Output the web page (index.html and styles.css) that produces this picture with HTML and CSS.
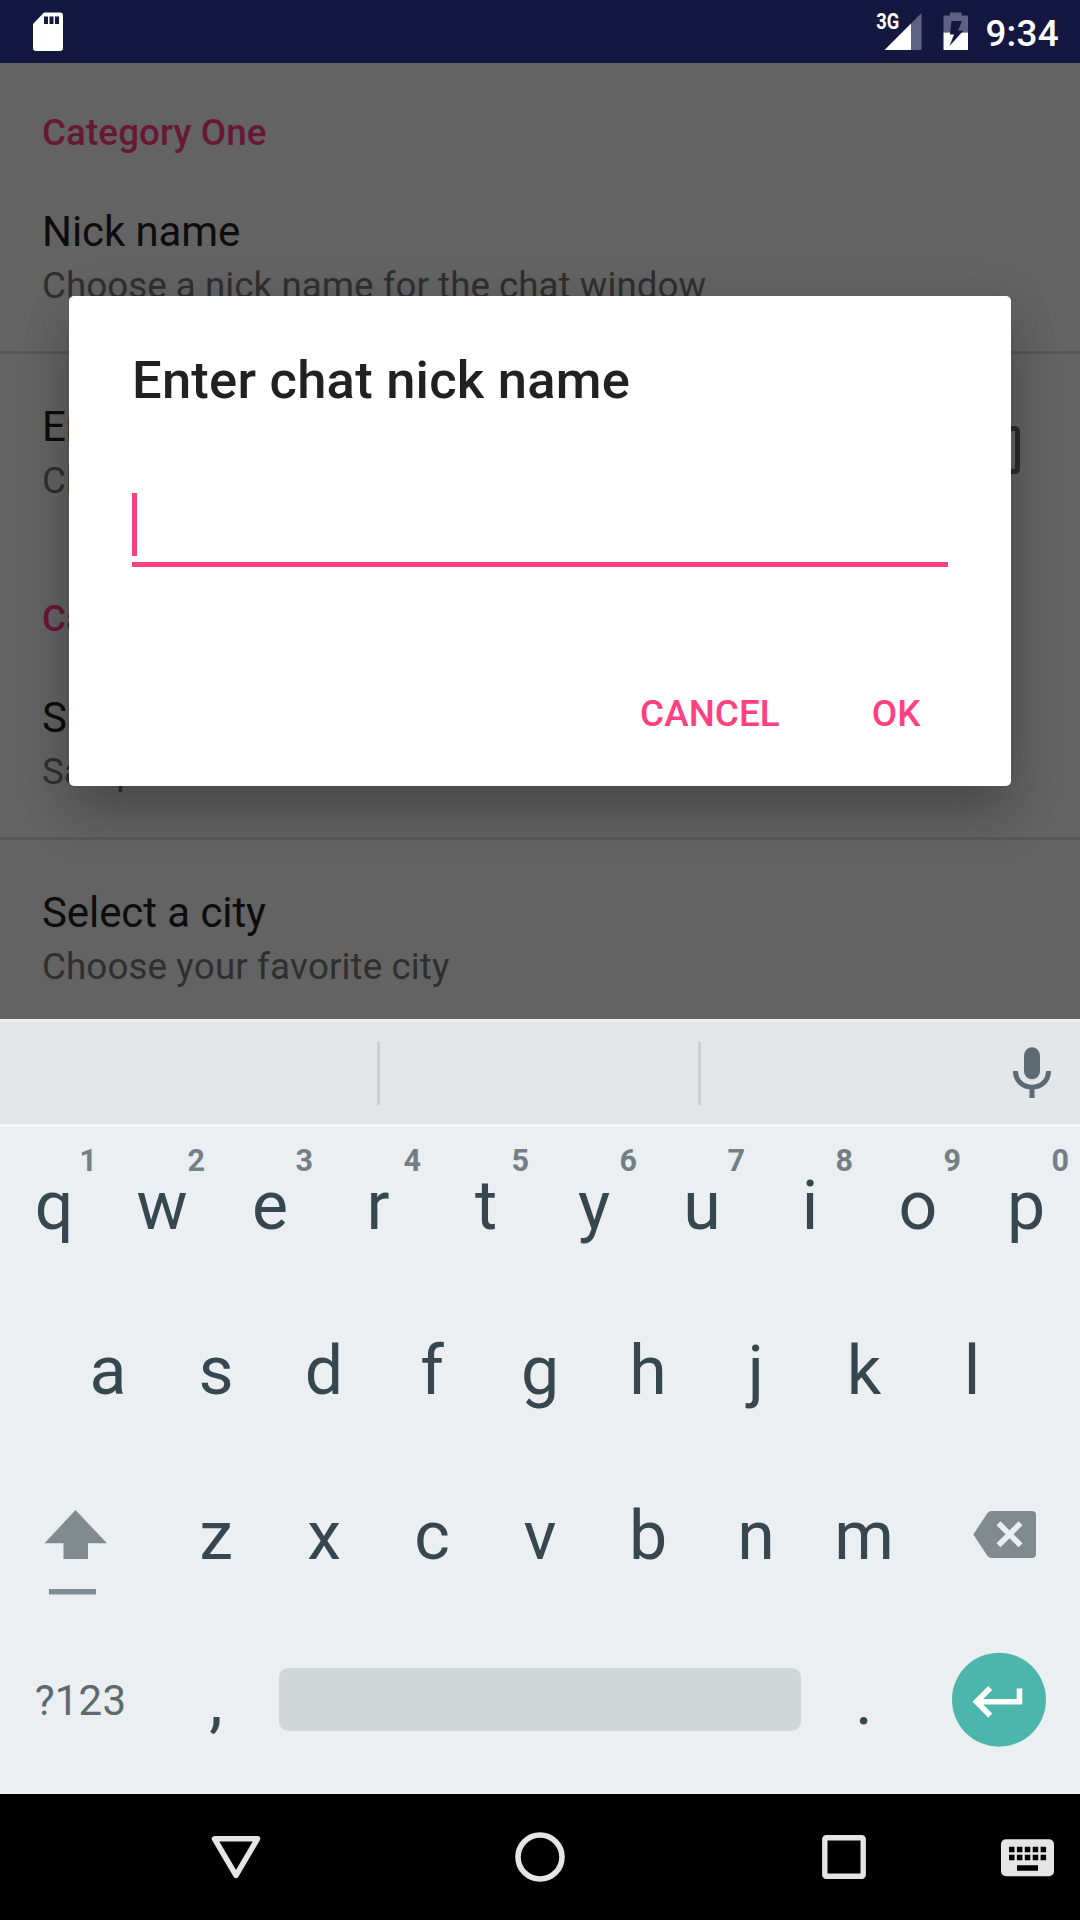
FILE: index.html
```html
<!DOCTYPE html>
<html lang="en">
<head>
<meta charset="utf-8">
<title>Settings</title>
<link rel="stylesheet" href="styles.css">
</head>
<body>
<div class="screen">
  <header class="status">
    <svg class="sd" width="32" height="40" viewBox="0 0 32 40"><path fill="#fff" fill-rule="evenodd" d="M12 .5H28Q31 .5 31 3.500V36Q31 39 28 39H4Q1 39 1 36V12ZM12 4.500V12H16V4.500ZM17.500 4.500V12H21.500V4.500ZM23 4.500V12H27V4.500Z"/></svg>
    <div class="status-right">
      <svg class="signal" width="48" height="40" viewBox="0 0 48 40"><path fill="#5f6282" d="M46.500 1V38H36V11.500Z"/><path fill="#fff" d="M9.500 38 36 11.500V38Z"/><text x="1.200" y="17.300" textLength="23" lengthAdjust="spacingAndGlyphs" class="net">3G</text></svg>
      <svg class="battery" width="26" height="40" viewBox="0 0 26 40"><path fill="#5f6282" d="M7 .5H18.500V3.500H25V20.500H.5V3.500H7Z"/><path fill="#fff" d="M.5 20.500H25V38H.5Z"/><path fill="#141840" d="M8.500 9H19L15 18.500H20.500L6.500 34L11 22.500H7Z"/></svg>
      <span class="clock">9:34</span>
    </div>
  </header>

  <main class="prefs">
    <h2 class="category">Category One</h2>
    <section class="row"><div class="title">Nick name</div><div class="summary">Choose a nick name for the chat window</div></section>
    <section class="row check-row"><div><div class="title">Enable</div><div class="summary">Check</div></div><i class="checkbox"></i></section>
    <h2 class="category">Category Two</h2>
    <section class="row"><div class="title">Sample</div><div class="summary">Sample</div></section>
    <section class="row"><div class="title">Select a city</div><div class="summary">Choose your favorite city</div></section>
  </main>

  <div class="dialog">
    <h1>Enter chat nick name</h1>
    <div class="field"><i class="cursor"></i></div>
    <div class="actions"><span>CANCEL</span><span>OK</span></div>
  </div>

  <div class="keyboard">
    <div class="strip">
      <div class="slot first"></div><div class="slot second"></div>
      <svg class="mic" width="40" height="54" viewBox="0 0 40 54"><rect x="12" y="1.300" width="16" height="32" rx="8" fill="#5c6b73"/><path d="M3.500 25C3.500 46.500 36.500 46.500 36.500 25M20 41V52" fill="none" stroke="#5c6b73" stroke-width="5"/></svg>
    </div>
    <div class="keys">
      <div class="krow">
        <b class="key">q<sup>1</sup></b><b class="key">w<sup>2</sup></b><b class="key">e<sup>3</sup></b><b class="key">r<sup>4</sup></b><b class="key">t<sup>5</sup></b><b class="key">y<sup>6</sup></b><b class="key">u<sup>7</sup></b><b class="key">i<sup>8</sup></b><b class="key">o<sup>9</sup></b><b class="key">p<sup>0</sup></b>
      </div>
      <div class="krow">
        <b class="key">a</b><b class="key">s</b><b class="key">d</b><b class="key">f</b><b class="key">g</b><b class="key">h</b><b class="key">j</b><b class="key">k</b><b class="key">l</b>
      </div>
      <div class="krow">
        <div class="wide"><svg width="162" height="165" viewBox="0 0 162 165"><path fill="#818b8f" d="M75.500 48 107 81.300H88V97H63.500V81.300H44.500Z"/><path fill="#818b92" d="M49 127H96V132.500H49Z"/></svg></div>
        <b class="key">z</b><b class="key">x</b><b class="key">c</b><b class="key">v</b><b class="key">b</b><b class="key">n</b><b class="key">m</b>
        <div class="wide"><svg width="162" height="165" viewBox="0 0 162 165"><path fill="#818b8f" d="M73.500 49H114Q118 49 118 53V92Q118 96 114 96H73.500Q71 96 69.500 94L55.300 72.500 69.500 51Q71 49 73.500 49Z"/><path d="M80.500 61.300 102.500 83.300M102.500 61.300 80.500 83.300" stroke="#ebeff2" stroke-width="5.600"/></svg></div>
      </div>
      <div class="krow">
        <div class="wide mode">?123</div>
        <b class="key">,</b>
        <div class="space"></div>
        <b class="key">.</b>
        <div class="wide"><svg width="162" height="165" viewBox="0 0 162 165"><circle cx="81" cy="72.700" r="47" fill="#4db6ac"/><path fill="none" stroke="#fff" stroke-width="5.600" d="M101.500 61.500V74.700H59M72.200 61 58.500 74.700 72.200 88.400"/></svg></div>
      </div>
    </div>
  </div>

  <nav class="nav">
    <svg width="1080" height="126" viewBox="0 0 1080 126">
      <g fill="none" stroke="#e5e5e5">
        <path d="M214.500 44.800H257.500L236 81.300Z" stroke-width="5.600" stroke-linejoin="round"/>
        <circle cx="540" cy="63" r="22" stroke-width="5.600"/>
        <rect x="824.800" y="43.800" width="38.400" height="38.400" rx="1.500" stroke-width="5.400"/>
      </g>
      <rect x="1001" y="45.300" width="53" height="37" rx="5" fill="#e5e5e5"/>
      <path d="M1009 55.500h38M1009 63.500h38" stroke="#000" stroke-width="5.500" stroke-dasharray="5.500 2.400"/>
      <path d="M1017 74h21" stroke="#000" stroke-width="5.500"/>
    </svg>
  </nav>
</div>
</body>
</html>
```
FILE: styles.css
```css
* { box-sizing: border-box; margin: 0; padding: 0; }
body { font-family: Roboto, sans-serif; background: #000; }
svg { display: block; flex: none; }
.screen { position: relative; width: 1080px; height: 1920px; overflow: hidden; display: flex; flex-direction: column; }

.status { height: 63px; flex: none; background: #141840; display: flex; justify-content: space-between; padding: 12px 21px 0 31.500px; }
.status-right { display: flex; }
.battery { margin-left: 20px; }
.signal { overflow: visible; }
.net { font-size: 22px; font-weight: 700; fill: #fff; }
.clock { margin-left: 16px; color: #fff; font-size: 36.75px; font-weight: 500; line-height: 43px; letter-spacing: .3px; }

.prefs { height: 956px; flex: none; background: #636363; overflow: hidden; }
.category { height: 96px; padding: 43px 0 0 42px; font-size: 36.75px; font-weight: 500; line-height: 54px; letter-spacing: .1px; color: #661834; }
.row { height: 195px; padding: 47px 0 0 42px; border-bottom: 3px solid #575757; }
.row:has(+ .category) { border-bottom: 0; }
.title { font-size: 42px; line-height: 52px; letter-spacing: -.08px; color: #0d0d0d; }
.summary { font-size: 36.75px; line-height: 55px; font-kerning: none; letter-spacing: .03px; color: #2f2f2f; white-space: nowrap; }
.row:last-child .summary { letter-spacing: .1px; }
.check-row { display: flex; justify-content: space-between; padding-right: 60px; }
.checkbox { width: 48px; height: 48px; margin-top: 25px; border: 5px solid #2a2a2a; border-radius: 5px; }

.dialog { position: absolute; left: 69px; top: 296px; width: 942px; height: 490px; padding: 0 63px; background: #fff; border-radius: 5px; box-shadow: 0 30px 50px rgba(0,0,0,.2), 0 8px 50px rgba(0,0,0,.1); display: flex; flex-direction: column; }
.dialog h1 { margin-top: 52px; font-size: 52.5px; font-weight: 500; line-height: 64px; letter-spacing: .24px; color: #212121; }
.field { height: 74px; margin-top: 81px; border-bottom: 5px solid #ff4081; }
.cursor { display: block; width: 5px; height: 63px; background: #ff4081; }
.actions { display: flex; justify-content: flex-end; gap: 92px; margin-top: 125px; padding-right: 27.500px; font-size: 36.75px; font-weight: 500; line-height: 44px; letter-spacing: .1px; color: #ff4081; }

.keyboard { height: 775px; flex: none; background: #ebeff2; }
.strip { height: 108px; display: flex; padding-top: 20px; background: #e2e6e9; border-top: 3px solid #eef0f1; border-bottom: 3px solid #f5f8f9; }
.slot { height: 63px; border-right: 3px solid #cbcfd2; }
.first { width: 380px; }
.second { width: 321px; }
.mic { margin: 4px 0 0 311px; }
.keys { padding-top: 5px; }
.krow { height: 165px; display: flex; justify-content: center; }
.key { position: relative; width: 108px; padding-top: 34px; text-align: center; font-size: 68px; font-weight: 400; line-height: 80px; color: #37474f; }
.key sup { position: absolute; right: 11px; top: 9px; font-size: 30.500px; line-height: 40px; font-weight: 700; color: #737f85; }
.wide { width: 162px; }
.mode { padding: 49px 1px 0 0; text-align: center; font-size: 42px; line-height: 50px; letter-spacing: .2px; color: #5b6b70; }
.space { width: 522px; height: 63px; margin: 41px 9px 0; border-radius: 9px; background: #d1d6d9; }

.nav { height: 126px; flex: none; background: #000; }
```
